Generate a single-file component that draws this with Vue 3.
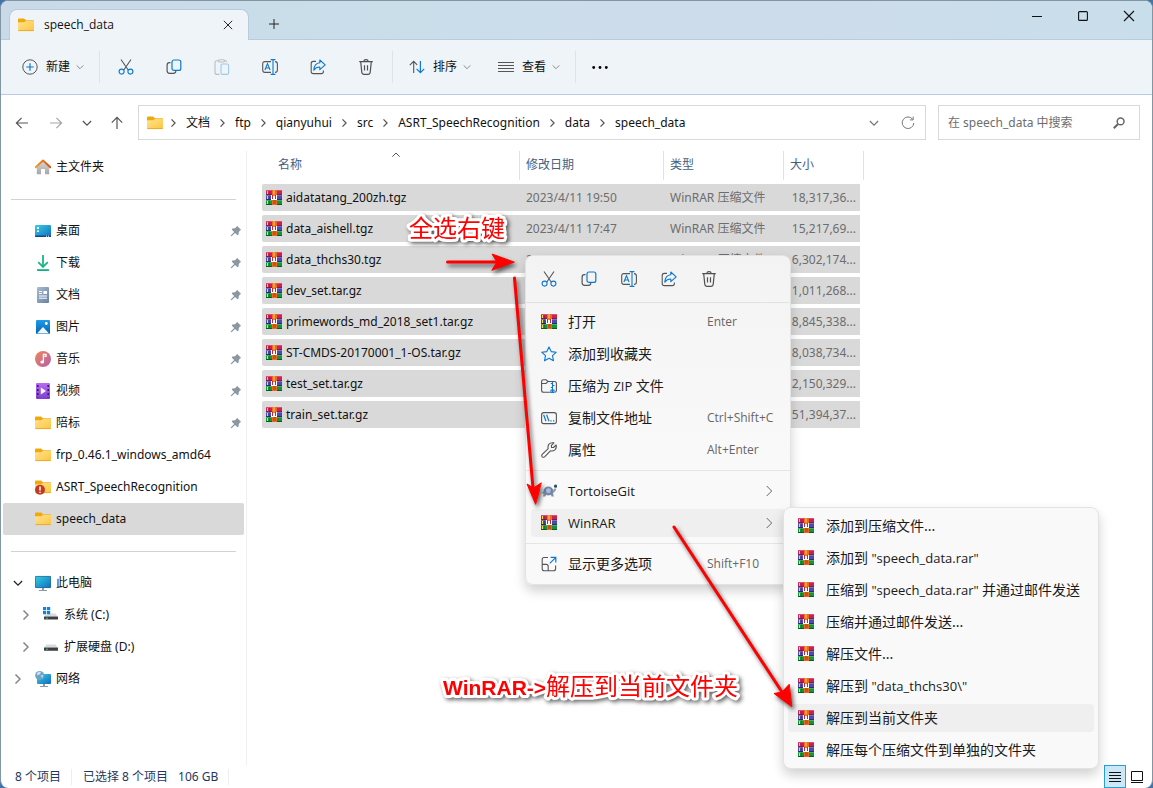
<script setup>
import { ref } from 'vue'

const query = ref('')

const editTools = [
  { icon: 'cut', name: '剪切' },
  { icon: 'copy', name: '复制' },
  { icon: 'paste', name: '粘贴', faded: true },
  { icon: 'rename', name: '重命名' },
  { icon: 'share', name: '共享' },
  { icon: 'trash', name: '删除' },
]

const menuTools = editTools.filter((tool) => !tool.faded)

const crumbs = ['文档', 'ftp', 'qianyuhui', 'src', 'ASRT_SpeechRecognition', 'data', 'speech_data']

const places = [
  { icon: 'desktop', name: '桌面', pinned: true },
  { icon: 'download', name: '下载', pinned: true },
  { icon: 'document', name: '文档', pinned: true },
  { icon: 'picture', name: '图片', pinned: true },
  { icon: 'music', name: '音乐', pinned: true },
  { icon: 'video', name: '视频', pinned: true },
  { icon: 'folder', name: '陪标', pinned: true },
  { icon: 'folder', name: 'frp_0.46.1_windows_amd64' },
  { icon: 'folder-alert', name: 'ASRT_SpeechRecognition' },
  { icon: 'folder', name: 'speech_data', selected: true },
]

const devices = [
  { icon: 'computer', name: '此电脑', open: true },
  { icon: 'drive-c', name: '系统 (C:)', nested: true },
  { icon: 'drive-d', name: '扩展硬盘 (D:)', nested: true },
  { icon: 'network', name: '网络' },
]

const files = [
  { name: 'aidatatang_200zh.tgz', date: '2023/4/11 19:50', type: 'WinRAR 压缩文件', size: '18,317,36...' },
  { name: 'data_aishell.tgz', date: '2023/4/11 17:47', type: 'WinRAR 压缩文件', size: '15,217,69...' },
  { name: 'data_thchs30.tgz', date: '2023/4/11 17:20', type: 'WinRAR 压缩文件', size: '6,302,174...' },
  { name: 'dev_set.tar.gz', size: '1,011,268...' },
  { name: 'primewords_md_2018_set1.tar.gz', size: '8,845,338...' },
  { name: 'ST-CMDS-20170001_1-OS.tar.gz', size: '8,038,734...' },
  { name: 'test_set.tar.gz', size: '2,150,329...' },
  { name: 'train_set.tar.gz', size: '51,394,37...' },
]

// Labels alternate between Chinese and Latin runs, starting with Chinese.
const menuGroups = [
  [
    { icon: 'rar', label: ['打开'], keys: 'Enter' },
    { icon: 'star', label: ['添加到收藏夹'] },
    { icon: 'zip', label: ['压缩为', ' ZIP ', '文件'] },
    { icon: 'path', label: ['复制文件地址'], keys: 'Ctrl+Shift+C' },
    { icon: 'wrench', label: ['属性'], keys: 'Alt+Enter' },
  ],
  [
    { icon: 'tortoise', label: ['', 'TortoiseGit'], sub: true },
    { icon: 'rar', label: ['', 'WinRAR'], sub: true, active: true },
  ],
  [{ icon: 'more', label: ['显示更多选项'], keys: 'Shift+F10' }],
]

const rarActions = [
  { label: ['添加到压缩文件...'] },
  { label: ['添加到', ' "speech_data.rar"'] },
  { label: ['压缩到', ' "speech_data.rar" ', '并通过邮件发送'] },
  { label: ['压缩并通过邮件发送...'] },
  { label: ['解压文件...'] },
  { label: ['解压到', ' "data_thchs30\\"'] },
  { label: ['解压到当前文件夹'], active: true },
  { label: ['解压每个压缩文件到单独的文件夹'] },
]
</script>

<template>
  <svg class="defs" aria-hidden="true">
    <defs>
      <linearGradient id="g-folder" x1="0" y1="0" x2="1" y2="1">
        <stop offset="0" stop-color="#ffe394" /><stop offset="1" stop-color="#fcc63c" />
      </linearGradient>
      <linearGradient id="g-blue" x1="0" y1="0" x2="1" y2="1">
        <stop offset="0" stop-color="#37d0e6" /><stop offset="1" stop-color="#0f6cbd" />
      </linearGradient>
      <linearGradient id="g-pic" x1="0" y1="0" x2="0" y2="1">
        <stop offset="0" stop-color="#1f9be6" /><stop offset="1" stop-color="#0563b5" />
      </linearGradient>
      <linearGradient id="g-doc" x1="0" y1="0" x2="1" y2="1">
        <stop offset="0" stop-color="#a9bdd3" /><stop offset="1" stop-color="#6681a3" />
      </linearGradient>
      <linearGradient id="g-music" x1="0" y1="0" x2="1" y2="1">
        <stop offset="0" stop-color="#f08752" /><stop offset="1" stop-color="#b55db0" />
      </linearGradient>
      <linearGradient id="g-video" x1="0" y1="0" x2="0" y2="1">
        <stop offset="0" stop-color="#b76cf2" /><stop offset="1" stop-color="#7f3fd0" />
      </linearGradient>
      <linearGradient id="g-home" x1="0" y1="0" x2="0" y2="1">
        <stop offset="0" stop-color="#d8d8d8" /><stop offset="1" stop-color="#a6a6a6" />
      </linearGradient>
      <linearGradient id="g-roof" x1="0" y1="0" x2="1" y2="0">
        <stop offset="0" stop-color="#f59a23" /><stop offset="1" stop-color="#d8520f" />
      </linearGradient>
      <linearGradient id="g-down" x1="0" y1="0" x2="0" y2="1">
        <stop offset="0" stop-color="#3fd08c" /><stop offset="1" stop-color="#12a08a" />
      </linearGradient>
    </defs>

    <symbol id="folder" viewBox="0 0 16 16">
      <path d="M0 2.6Q0 1.5 1 1.5H6L8 3.3H15Q16 3.3 16 4.3V8H0Z" fill="#f0a80c" />
      <path d="M0 6.2Q0 5.3 .9 5.3H6.3L8.1 3.7H15.1Q16 3.7 16 4.6V13.2Q16 14 15.1 14H.9Q0 14 0 13.2Z" fill="url(#g-folder)" />
      <path d="M.4 13.6H15.6" stroke="#e5a722" stroke-width=".9" />
    </symbol>
    <symbol id="folder-alert" viewBox="0 0 16 16">
      <use href="#folder" width="16" height="16" />
      <circle cx="5" cy="10.8" r="5" fill="#c23a22" />
      <path d="M5 7.6V11.6M5 12.7V14.1" stroke="#fff" stroke-width="1.5" />
    </symbol>
    <symbol id="home" viewBox="0 0 16 16">
      <path d="M1.8 7.5L8 2L14.2 7.5V15.2H10V10H6V15.2H1.8Z" fill="url(#g-home)" />
      <path d="M.7 8.3L8 1.6L15.3 8.3" fill="none" stroke="url(#g-roof)" stroke-width="2" stroke-linecap="round" stroke-linejoin="round" />
    </symbol>
    <symbol id="desktop" viewBox="0 0 16 16">
      <rect y="2" width="16" height="12" rx="1" fill="url(#g-blue)" />
      <path d="M2 4H4V6H2ZM2 7.5H4V9H2Z" fill="#fff" />
      <path d="M0 12.6H16V13Q16 14 15 14H1Q0 14 0 13Z" fill="#0a4a86" />
      <path d="M11 13.2H12M13 13.2H14" stroke="#fff" />
    </symbol>
    <symbol id="download" viewBox="0 0 16 16">
      <path d="M8 0V11.5M3.2 7.2L8 12L12.8 7.2" fill="none" stroke="#1db588" stroke-width="1.8" />
      <rect x="2" y="14" width="12" height="2" rx=".5" fill="url(#g-down)" />
    </symbol>
    <symbol id="document" viewBox="0 0 16 16">
      <rect x="2" y="0" width="12" height="16" rx="1" fill="url(#g-doc)" />
      <path d="M4 4.5H7M4 6.5H7M4 9H12M4 11.2H12" stroke="#fff" />
      <rect x="8.4" y="4" width="3.6" height="3" fill="#fff" />
    </symbol>
    <symbol id="picture" viewBox="0 0 16 16">
      <rect x="1" y="1" width="14" height="14" rx="1" fill="url(#g-pic)" />
      <path d="M2 14.6L8 8L14 14.6Z" fill="#f2faff" />
      <circle cx="11.3" cy="4.5" r="1.4" fill="#fff" />
    </symbol>
    <symbol id="music" viewBox="0 0 16 16">
      <circle cx="8" cy="8" r="8" fill="url(#g-music)" />
      <ellipse cx="7.2" cy="11" rx="1.9" ry="1.6" fill="#fff" />
      <path d="M8.4 11V3.4H11V5.4H9.3" fill="none" stroke="#fff" stroke-width="1.3" />
    </symbol>
    <symbol id="video" viewBox="0 0 16 16">
      <rect x="1" y="0" width="14" height="16" rx="1" fill="url(#g-video)" />
      <path d="M2.8 2V14.5M13.2 2V14.5" stroke="#3d1672" stroke-width="1.6" stroke-dasharray="2 2" />
      <path d="M5.8 4.6L11 8L5.8 11.4Z" fill="#fff" />
    </symbol>
    <symbol id="computer" viewBox="0 0 16 16">
      <rect y="1" width="16" height="12" rx="1" fill="url(#g-blue)" />
      <rect x=".4" y="1.4" width="15.2" height="11.2" rx=".7" fill="none" stroke="#27698f" stroke-width=".7" />
      <path d="M7 13H9V15H7ZM4 15H12V16H4Z" fill="#8d9aa5" />
    </symbol>
    <symbol id="network" viewBox="0 0 16 16">
      <rect x="2" y="3" width="14" height="10" rx="1" fill="url(#g-blue)" />
      <path d="M8 13H10V15H8ZM5 15H13V16H5Z" fill="#8d9aa5" />
      <circle cx="4.7" cy="4.5" r="4.5" fill="#6fa3c4" />
      <path d="M2 2Q4 .2 6 1L5 3.2L2.2 4.6ZM5.5 4.5L8 4L7.6 7Z" fill="#c8e2f0" />
    </symbol>
    <symbol id="drive-d" viewBox="0 0 16 16">
      <path d="M3.5 5.5H12.5L14.6 8.4H1.2Z" fill="#d9dadd" />
      <rect x="1" y="8.4" width="14" height="3.4" rx=".4" fill="#3d4043" />
      <path d="M3.2 10.2H4.8" stroke="#48e05c" />
    </symbol>
    <symbol id="drive-c" viewBox="0 0 16 16">
      <path d="M7 6.5H12.5L14.6 9.4H1.2L2 8Z" fill="#d9dadd" />
      <rect x="1" y="9.4" width="14" height="3.2" rx=".4" fill="#3d4043" />
      <path d="M3.2 11.2H4.8" stroke="#48e05c" />
      <path d="M0 0H3.2V3.2H0ZM4 0H7.2V3.2H4ZM0 4H3.2V7.2H0ZM4 4H7.2V7.2H4Z" fill="#1283dc" />
    </symbol>
    <symbol id="pin" viewBox="0 0 12 12">
      <path d="M7 .8L11.2 5L9.9 5.6L8.8 7.2L8.5 9.6L7.6 10.3L5 7.9L1.6 11.2L.8 11.2L.8 10.4L4.1 7L1.7 4.4L2.4 3.5L4.8 3.2L6.4 2.1Z" fill="#8c98a1" />
    </symbol>

    <symbol id="rar" viewBox="0 0 16 16">
      <g shape-rendering="crispEdges">
        <rect y="0" width="16" height="5" fill="#c8234f" />
        <rect y="0" width="16" height="1" fill="#e14b74" />
        <rect y="4" width="16" height="1" fill="#8d1737" />
        <rect y="5" width="16" height="5" fill="#4a4ab0" />
        <rect y="5" width="16" height="1" fill="#7472cf" />
        <rect y="9" width="16" height="1" fill="#2b2c73" />
        <rect y="10" width="16" height="5" fill="#15923a" />
        <rect y="10" width="16" height="1" fill="#3cb556" />
        <rect y="14" width="16" height="1" fill="#0b5a22" />
        <rect x="1" y="1" width="1" height="3" fill="#ffd83a" />
        <rect x="1" y="6" width="1" height="3" fill="#ffd83a" />
        <rect x="1" y="11" width="1" height="3" fill="#ffd83a" />
        <rect x="3" y="1" width="1" height="13" fill="#222" opacity=".25" />
        <rect x="6" y="0" width="5" height="15" fill="#e96b1c" />
        <rect x="7" y="0" width="2" height="4" fill="#f79a4e" />
        <rect x="7" y="10" width="3" height="4" fill="#c9540f" />
        <rect x="5" y="5" width="6" height="5" fill="#fff" />
        <path d="M6 5H10V6H6ZM6 6H7V9H6ZM9 6H10V9H9Z" fill="#c42a26" />
        <path d="M7 4H9V6H7Z" fill="#f0813a" />
      </g>
    </symbol>

    <symbol id="cut" viewBox="0 0 16 16">
      <g fill="none" stroke-width="1.1">
        <path d="M3 .5L10.2 11M13 .5L5.8 11" stroke="#555" />
        <circle cx="3.6" cy="12.6" r="2.5" stroke="#0c78d0" />
        <circle cx="12.4" cy="12.6" r="2.5" stroke="#0c78d0" />
      </g>
    </symbol>
    <symbol id="copy" viewBox="0 0 16 16">
      <g fill="none" stroke-width="1.2">
        <path d="M4.5 3.6H3.4Q1.1 3.6 1.1 6V11.8Q1.1 14.3 3.6 14.3H7.4Q9.6 14.3 9.9 12.2" stroke="#555" />
        <rect x="6" y="1" width="8.8" height="10.4" rx="2" stroke="#0c78d0" />
      </g>
    </symbol>
    <symbol id="paste" viewBox="0 0 16 16">
      <g fill="none" stroke-width="1.1">
        <path d="M4.5 1.8H3Q1 1.8 1 3.6V13.4Q1 15.4 3 15.4H5.5M10.5 1.8H11.2Q12.6 1.8 12.8 3.2" stroke="#b9bec3" />
        <rect x="4.5" y=".7" width="6" height="2.3" rx="1.1" stroke="#b9bec3" />
        <rect x="7" y="5" width="7.6" height="10.4" rx="1.5" stroke="#9ccaec" />
      </g>
    </symbol>
    <symbol id="rename" viewBox="0 0 16 16">
      <g fill="none" stroke-width="1.1">
        <path d="M9 2.6H3Q.7 2.6 .7 5V11Q.7 13.4 3 13.4H9M13 2.6Q15.4 2.6 15.4 5V11Q15.4 13.4 13 13.4" stroke="#555" />
        <path d="M8.6 .6H13.4M8.6 15.4H13.4M11 .6V15.4M2.9 11L5.5 4.6L8.1 11M3.8 9H7.2" stroke="#0c78d0" />
      </g>
    </symbol>
    <symbol id="share" viewBox="0 0 16 16">
      <g fill="none" stroke-width="1.1" stroke-linejoin="round">
        <path d="M6 2.4H3.3Q1.2 2.4 1.2 4.6V12.4Q1.2 14.6 3.4 14.6H11.3Q13.4 14.6 13.4 12.4V11.4" stroke="#555" />
        <path d="M9.8 1L15.2 5.8L9.8 10.6V8Q6.2 7.8 3.8 11.2Q4.2 4.2 9.8 3.8Z" stroke="#0c78d0" />
      </g>
    </symbol>
    <symbol id="trash" viewBox="0 0 16 16">
      <path d="M1.2 2.7H14.8M5.8 2.5Q5.9 .7 8 .7T10.2 2.5M2.7 2.8L3.8 13.4Q4 15.3 5.8 15.3H10.2Q12 15.3 12.2 13.4L13.3 2.8M6.5 6.2V11.6M9.5 6.2V11.6" fill="none" stroke="#505050" stroke-width="1.2" />
    </symbol>
    <symbol id="new" viewBox="0 0 16 16">
      <circle cx="8" cy="8" r="7.2" fill="none" stroke="#555" />
      <path d="M8 4.3V11.7M4.3 8H11.7" stroke="#0c78d0" stroke-width="1.2" />
    </symbol>
    <symbol id="sort" viewBox="0 0 16 16">
      <path d="M4.7 14V2.5M.8 6.2L4.7 2.3L8.2 5.8" fill="none" stroke="#555" stroke-width="1.1" />
      <path d="M11.4 2V13.5M7.6 9.8L11.4 13.6L15.2 9.8" fill="none" stroke="#0c78d0" stroke-width="1.2" />
    </symbol>
    <symbol id="view" viewBox="0 0 16 16">
      <path d="M0 3.5H16M0 6.5H16M0 9.5H16M0 12.5H16" stroke="#555" />
    </symbol>
    <symbol id="dots" viewBox="0 0 16 16">
      <circle cx="1.7" cy="8.5" r="1.4" /><circle cx="8" cy="8.5" r="1.4" /><circle cx="14.3" cy="8.5" r="1.4" />
    </symbol>
    <symbol id="star" viewBox="0 0 16 16">
      <path d="M8 .9L10.2 5.6L15.3 6.2L11.5 9.7L12.5 14.8L8 12.3L3.5 14.8L4.5 9.7L.7 6.2L5.8 5.6Z" fill="none" stroke="#0c78d0" stroke-width="1.1" stroke-linejoin="round" />
    </symbol>
    <symbol id="zip" viewBox="0 0 16 16">
      <path d="M9.5 14.3H2.6Q.6 14.3 .6 12.3V3.6Q.6 1.7 2.6 1.7H5L7.2 3.5H13.4Q15.4 3.5 15.4 5.5V12.3Q15.4 14 14 14.3M.8 5.5H5L7 3.6" fill="none" stroke="#555" stroke-width="1.1" />
      <path d="M11.5 3.5V14.5M9.8 5.5H11.5M11.5 7.5H13.4M9.8 9.5H11.5M10 12H13V14.5H10Z" fill="none" stroke="#0c78d0" stroke-width="1.1" />
    </symbol>
    <symbol id="path" viewBox="0 0 16 16">
      <rect x=".6" y="2.6" width="14.8" height="11" rx="2.2" fill="none" stroke="#555" stroke-width="1.1" />
      <path d="M2.6 4.8L5 11.2M5.6 4.8L8 11.2M9.3 10.8H10.6M12 10.8H13.3" stroke="#0c78d0" stroke-width="1.2" />
    </symbol>
    <symbol id="wrench" viewBox="0 0 16 16">
      <path d="M12.9 .9Q9.8 .2 8 2.2Q6.5 4 7.2 6.6L1.2 12.4Q.2 13.6 1.2 14.8Q2.4 15.8 3.6 14.8L9.4 8.8Q12 9.5 13.9 7.9Q15.9 6 15.1 3L12.5 5.5L10.5 5.4L10.4 3.4Z" fill="none" stroke="#555" stroke-width="1.1" stroke-linejoin="round" />
    </symbol>
    <symbol id="tortoise" viewBox="0 0 16 16">
      <path d="M3 10L1.8 13.4H4.4L5.4 11.6H9.6L10.6 13.6H12.8L12 10Z" fill="#8a8f98" />
      <ellipse cx="7.4" cy="8" rx="5" ry="4.4" fill="#7088ac" />
      <path d="M4.6 6L7.3 4.6L10.2 6L10 9.5L7.4 10.8L4.8 9.5Z" fill="#a9bbdc" stroke="#5c6f92" stroke-width=".6" />
      <path d="M.4 10L3 8.6V11Z" fill="#8a8f98" />
      <path d="M11.5 8.5L13.2 5.4L15.4 5.8L14.6 7.8L12.4 10Z" fill="#979ba3" />
      <circle cx="14.5" cy="3.2" r="1.6" fill="#2c5067" />
    </symbol>
    <symbol id="more" viewBox="0 0 16 16">
      <path d="M7 1.5H3.2Q1.2 1.5 1.2 3.5V12.7Q1.2 14.7 3.2 14.7H12.6Q14.6 14.7 14.6 12.7V9.4M1.4 8.4H5.2Q7.2 8.4 7.2 10.4V14.6" fill="none" stroke="#555" stroke-width="1.1" />
      <path d="M9.6 1.4H14.8V6.6M14.6 1.6L8.8 7.4" fill="none" stroke="#0c78d0" stroke-width="1.2" />
    </symbol>

    <symbol id="chev-down" viewBox="0 0 8 8">
      <path d="M.7 2.4L4 5.7L7.3 2.4" fill="none" stroke="currentColor" />
    </symbol>
    <symbol id="chev-right" viewBox="0 0 8 8">
      <path d="M2 .4L5.6 4L2 7.6" fill="none" stroke="currentColor" stroke-width="1.2" />
    </symbol>
    <symbol id="chev-thin" viewBox="0 0 12 12">
      <path d="M3.7 1L8.7 6L3.7 11" fill="none" stroke="currentColor" />
    </symbol>
    <symbol id="arrow" viewBox="0 0 14 14">
      <path d="M13 7H1.6M6.6 1.8L1.4 7L6.6 12.2" fill="none" stroke="currentColor" stroke-width="1.2" />
    </symbol>
    <symbol id="close" viewBox="0 0 12 12">
      <path d="M1 1L11 11M11 1L1 11" stroke="currentColor" stroke-width="1.1" />
    </symbol>
  </svg>

  <div class="window">
    <header class="titlebar">
      <div class="tab">
        <svg class="i16"><use href="#folder" /></svg>
        <span class="tab-name">speech_data</span>
        <button class="tab-close" aria-label="关闭标签页"><svg class="i10"><use href="#close" /></svg></button>
      </div>
      <button class="tab-new" aria-label="新建标签页">
        <svg class="i10" viewBox="0 0 10 10"><path d="M5 0V10M0 5H10" stroke="#222" /></svg>
      </button>
      <div class="controls">
        <button aria-label="最小化"><svg class="i10" viewBox="0 0 10 10"><path d="M0 5.5H10" stroke="#111" /></svg></button>
        <button aria-label="最大化"><svg class="i10" viewBox="0 0 10 10"><rect x=".6" y=".6" width="8.800" height="8.800" rx="1" fill="none" stroke="#111" stroke-width="1.1" /></svg></button>
        <button aria-label="关闭"><svg class="i12"><use href="#close" /></svg></button>
      </div>
    </header>

    <div class="toolbar">
      <button class="tool-text tool-new">
        <svg class="i16"><use href="#new" /></svg>新建<svg class="i8"><use href="#chev-down" /></svg>
      </button>
      <span class="bar"></span>
      <button v-for="tool in editTools" :key="tool.icon" class="tool" :aria-label="tool.name" :disabled="tool.faded">
        <svg class="i16"><use :href="'#' + tool.icon" /></svg>
      </button>
      <span class="bar"></span>
      <button class="tool-text">
        <svg class="i16"><use href="#sort" /></svg>排序<svg class="i8"><use href="#chev-down" /></svg>
      </button>
      <button class="tool-text">
        <svg class="i16"><use href="#view" /></svg>查看<svg class="i8"><use href="#chev-down" /></svg>
      </button>
      <span class="bar"></span>
      <button class="tool tool-more" aria-label="更多"><svg class="i16"><use href="#dots" /></svg></button>
    </div>

    <nav class="navrow">
      <div class="history">
        <button aria-label="后退"><svg class="i14"><use href="#arrow" /></svg></button>
        <button aria-label="前进" class="pale"><svg class="i14 flip"><use href="#arrow" /></svg></button>
        <button aria-label="最近浏览"><svg class="i10"><use href="#chev-down" /></svg></button>
        <button aria-label="上移"><svg class="i14 up"><use href="#arrow" /></svg></button>
      </div>
      <div class="address">
        <svg class="i16 address-icon"><use href="#folder" /></svg>
        <template v-for="crumb in crumbs" :key="crumb">
          <svg class="crumb-chev"><use href="#chev-right" /></svg>
          <a href="#">{{ crumb }}</a>
        </template>
        <span class="spring"></span>
        <button aria-label="历史地址"><svg class="i10"><use href="#chev-down" /></svg></button>
        <button aria-label="刷新">
          <svg class="i14" viewBox="0 0 14 14"><path d="M11.6 3.2A5.8 5.8 0 1 0 12.8 7M12.2 .6V3.9H8.9" fill="none" stroke="currentColor" /></svg>
        </button>
      </div>
      <label class="search">
        <input v-model="query" type="text" placeholder="在 speech_data 中搜索" aria-label="搜索" />
        <svg class="i12" viewBox="0 0 12 12"><circle cx="7.6" cy="4.4" r="3.4" fill="none" stroke="#666" stroke-width="1.5" /><path d="M5 7L.8 11.2" stroke="#666" stroke-width="2" /></svg>
      </label>
    </nav>

    <div class="content">
      <aside class="sidebar">
        <a href="#" class="place"><span class="twist"></span><svg class="i16"><use href="#home" /></svg>主文件夹</a>
        <hr />
        <a v-for="p in places" :key="p.name" href="#" class="place" :class="{ selected: p.selected }">
          <span class="twist"></span>
          <svg class="i16"><use :href="'#' + p.icon" /></svg>{{ p.name }}
          <svg v-if="p.pinned" class="pin"><use href="#pin" /></svg>
        </a>
        <hr />
        <a v-for="d in devices" :key="d.name" href="#" class="place" :class="{ nested: d.nested, open: d.open }">
          <span class="twist"><svg class="i10"><use :href="d.open ? '#chev-down' : '#chev-right'" /></svg></span>
          <svg class="i16"><use :href="'#' + d.icon" /></svg>{{ d.name }}
        </a>
      </aside>

      <main class="listing">
        <table>
          <colgroup><col class="c-name" /><col class="c-date" /><col class="c-type" /><col class="c-size" /></colgroup>
          <thead>
            <tr>
              <th class="sorted">名称<svg class="sort-mark" viewBox="0 0 8 8"><path d="M.3 5.7L4 2L7.7 5.7" fill="none" stroke="#555" /></svg></th>
              <th>修改日期</th>
              <th>类型</th>
              <th>大小</th>
            </tr>
          </thead>
          <tbody>
            <tr v-for="f in files" :key="f.name">
              <td class="file"><span><svg class="i16"><use href="#rar" /></svg>{{ f.name }}</span></td>
              <td>{{ f.date }}</td>
              <td>{{ f.type }}</td>
              <td class="size">{{ f.size }}</td>
            </tr>
          </tbody>
        </table>
      </main>
    </div>

    <footer class="status">
      <span class="count">8 个项目</span>
      <span class="chosen">已选择 8 个项目</span>
      <span class="total">106 GB</span>
      <span class="spring"></span>
      <button class="mode on" aria-label="详细信息"><svg class="i12" viewBox="0 0 12 12"><path d="M0 1.5H12M0 4.5H12M0 7.5H12M0 10.5H12" stroke="#111" /></svg></button>
      <button class="mode" aria-label="大图标"><svg class="i12" viewBox="0 0 12 12"><path d="M.5 .5H11.5V9.5H.5ZM0 11.5H12" fill="none" stroke="#111" /></svg></button>
    </footer>

    <div class="menu context" role="menu">
      <div class="menu-tools">
        <button v-for="tool in menuTools" :key="tool.icon" :aria-label="tool.name"><svg class="i16"><use :href="'#' + tool.icon" /></svg></button>
      </div>
      <div v-for="(group, g) in menuGroups" :key="g" class="group">
        <button v-for="item in group" :key="item.label.join('')" role="menuitem" class="item" :class="{ active: item.active }">
          <svg class="i16"><use :href="'#' + item.icon" /></svg>
          <span class="label"><span v-for="(part, i) in item.label" :key="i" :class="{ latin: i % 2 }">{{ part }}</span></span>
          <span v-if="item.keys" class="keys">{{ item.keys }}</span>
          <svg v-if="item.sub" class="i12 sub"><use href="#chev-thin" /></svg>
        </button>
      </div>
    </div>

    <div class="menu submenu" role="menu">
      <button v-for="item in rarActions" :key="item.label.join('')" role="menuitem" class="item" :class="{ active: item.active }">
        <svg class="i16"><use href="#rar" /></svg>
        <span class="label"><span v-for="(part, i) in item.label" :key="i" :class="{ latin: i % 2 }">{{ part }}</span></span>
      </button>
    </div>

    <svg class="notes" width="820" height="720" viewBox="0 0 820 720">
      <g class="arrows">
        <path d="M447.500 262H500M514.500 278L533 488M674 527L782 692" />
        <path class="head" d="M514 262L492 254L497 262L492 270ZM535.500 504L527 484L533.500 488L541 483ZM791.500 706.500L774 693.500L782 692L789 684.500Z" />
      </g>
      <g class="captions">
        <text x="409" y="237">全选右键</text>
        <text x="443" y="695"><tspan class="arial">WinRAR-&gt;</tspan>解压到当前文件夹</text>
      </g>
    </svg>
  </div>
</template>

<style>
html {
  background: #3f74ad;
}
body {
  margin: 0;
}
</style>

<style scoped>
.defs {
  position: absolute;
  width: 0;
  height: 0;
}
.window {
  position: relative;
  box-sizing: border-box;
  min-height: 100vh;
  display: flex;
  flex-direction: column;
  border: solid #8295a3;
  border-width: 1px 1px 0;
  border-radius: 8px;
  overflow: hidden;
  background: #fff;
  color: #111;
  font: 12px/16px "Noto Sans", "Noto Sans CJK SC", sans-serif;
}
button {
  display: flex;
  align-items: center;
  justify-content: center;
  padding: 0;
  border: 0;
  background: none;
  color: inherit;
  font: inherit;
}
a {
  color: inherit;
  text-decoration: none;
}
svg {
  flex: none;
}
.i8 { width: 8px; height: 8px; }
.i10 { width: 10px; height: 10px; }
.i12 { width: 12px; height: 12px; }
.i14 { width: 14px; height: 14px; }
.i16 { width: 16px; height: 16px; }
.spring {
  flex: 1;
}

.titlebar {
  display: flex;
  height: 39px;
  box-sizing: border-box;
  padding-left: 8px;
  border-bottom: 1px solid #b9ccdd;
  background: linear-gradient(90deg, #c9d9e7, #c9deea 30%, #cddceb 55%, #cddceb 70%, #c9deeb);
}
.tab {
  display: flex;
  align-items: center;
  box-sizing: border-box;
  width: 240px;
  height: 31px;
  margin-top: 8px;
  padding: 0 15px 0 8px;
  border: 1px solid #b9ccdd;
  border-bottom: 0;
  border-radius: 8px 8px 0 0;
  background: #eff4f9;
}
.tab-name {
  flex: 1;
  margin-left: 10px;
  font-family: "Open Sans", sans-serif;
}
.tab-new {
  width: 50px;
  height: 46px;
  color: #222;
}
.controls {
  display: flex;
  margin-left: auto;
}
.controls button {
  width: 46px;
  height: 30px;
}

.toolbar {
  display: flex;
  align-items: center;
  height: 54px;
  border-bottom: 1px solid #b9ccdf;
  background: #eff4f9;
}
.tool {
  width: 48px;
  height: 40px;
}
.tool-more {
  width: 44px;
}
.tool-text {
  gap: 8px;
  height: 40px;
  padding: 0 13px 0 14px;
}
.tool-text .i8 {
  margin-left: -2px;
  color: #888;
}
.tool-new {
  padding-left: 21px;
}
.bar {
  width: 1px;
  height: 32px;
  margin: 0 2px;
  background: #dde3e9;
}

.navrow {
  display: flex;
  gap: 12px;
  padding: 10px 12px 7px 5px;
}
.history {
  display: grid;
  grid-template-columns: 32px 36px 26px 34px;
  margin-right: -8px;
  color: #555;
}
.pale {
  color: #a5a5a5;
}
.flip {
  transform: rotate(180deg);
}
.up {
  transform: rotate(90deg);
}
.address,
.search {
  display: flex;
  align-items: center;
  box-sizing: border-box;
  height: 35px;
  border: 1px solid #d9d9d9;
}
.address {
  flex: 1;
  padding-left: 8px;
}
.address-icon {
  margin-right: -2px;
}
.address button {
  width: 34px;
  height: 32px;
  color: #777;
}
.crumb-chev {
  width: 25px;
  height: 8px;
  color: #555;
}
.search {
  width: 202px;
  padding: 0 14px 0 9px;
}
.search input {
  flex: 1;
  min-width: 0;
  padding: 0;
  border: 0;
  outline: 0;
  background: none;
  font: inherit;
}
.search input::placeholder {
  color: #6d6d6d;
  opacity: 1;
}

.content {
  flex: 1;
  display: flex;
}
.sidebar {
  width: 245px;
  margin-top: 4px;
  border-right: 1px solid #f0f0f0;
}
.place {
  display: flex;
  align-items: center;
  height: 32px;
  margin: 0 2px;
  border-radius: 2px;
}
.place > .i16 {
  margin-right: 5px;
}
.place.selected {
  background: #d9d9d9;
}
.twist {
  display: flex;
  width: 22px;
  margin-left: 10px;
  color: #888;
}
.nested .twist {
  margin-left: 18px;
}
.open .twist {
  color: #222;
}
.pin {
  width: 12px;
  height: 12px;
  margin-left: auto;
  margin-right: 2px;
}
.sidebar hr {
  height: 1px;
  margin: 16px 10px 15px;
  border: 0;
  background: #d2d2d2;
}

.listing {
  flex: 1;
  min-width: 0;
  padding-left: 15px;
}
table {
  table-layout: fixed;
  width: 602px;
  border-spacing: 0 4px;
}
.c-name { width: 258px; }
.c-date { width: 144px; }
.c-type { width: 120px; }
.c-size { width: 80px; }
th {
  box-sizing: border-box;
  height: 29px;
  padding: 0 6px 2px;
  border-right: 1px solid #e2e2e2;
  color: #44607f;
  font-weight: 400;
  text-align: left;
}
th.sorted {
  position: relative;
  padding-left: 16px;
}
.sort-mark {
  position: absolute;
  top: 0;
  left: 50%;
  width: 10px;
  height: 8px;
}
td {
  height: 27px;
  padding: 0 6px;
  background: #d9d9d9 padding-box;
  color: #6d6d6d;
  white-space: nowrap;
  overflow: hidden;
}
td.file {
  padding-left: 4px;
  border-radius: 2px 0 0 2px;
  color: #111;
}
td.file span {
  display: flex;
  align-items: center;
  gap: 4px;
}
td.size {
  padding: 0 4px;
  border-right: 4px solid transparent;
  border-radius: 0 4px 4px 0;
  text-align: right;
}

.status {
  display: flex;
  align-items: center;
  height: 23px;
  padding: 0 4px 0 14px;
  color: #1e395b;
}
.count,
.total {
  padding-right: 10px;
  border-right: 1px solid #eee;
}
.chosen {
  padding: 0 10px 0 11px;
}
.mode {
  box-sizing: border-box;
  width: 22px;
  height: 23px;
}
.mode.on {
  border: 1px solid #26a0da;
  background: #cce8f6;
}

.menu {
  position: absolute;
  box-sizing: border-box;
  border: 1px solid #e3e3e3;
  border-radius: 8px;
  background: #f9f9f9;
  box-shadow: 0 6px 12px rgba(0, 0, 0, 0.18);
  color: #1a1a1a;
  font-size: 14px;
  line-height: 20px;
}
.context {
  top: 254px;
  left: 524px;
  width: 266px;
  background: linear-gradient(#f3f3f3, #f9f9f9 60%);
}
.menu-tools {
  display: flex;
  height: 46px;
  margin-bottom: -1px;
  padding-left: 3px;
  border-bottom: 1px solid #e2e2e2;
}
.menu-tools button {
  width: 40px;
}
.group,
.submenu {
  display: flex;
  flex-direction: column;
  gap: 4px;
}
.group {
  padding: 6px 5px;
}
.group + .group {
  border-top: 1px solid #e5e5e5;
}
.item {
  height: 28px;
  padding: 0 10px;
  justify-content: flex-start;
  border-radius: 4px;
}
.item.active {
  background: #efefef;
}
.label {
  flex: 1;
  margin-left: 11px;
  text-align: left;
  white-space: pre;
}
.latin {
  font-family: "Open Sans", sans-serif;
  font-size: 13px;
}
.keys {
  width: 68px;
  font: 12px/20px "Open Sans", sans-serif;
  color: #666;
  text-align: left;
  white-space: nowrap;
}
.sub {
  color: #666;
}
.submenu {
  top: 506px;
  left: 782px;
  width: 316px;
  padding: 4px;
}
.submenu .label {
  margin-left: 12px;
}

.notes {
  position: absolute;
  top: -1px;
  left: -1px;
  pointer-events: none;
}
.arrows {
  fill: none;
  stroke: #fe0000;
  stroke-width: 3px;
  stroke-linecap: round;
  filter: drop-shadow(2px 3px 2px rgba(0, 0, 0, 0.6));
}
.head {
  fill: #fe0000;
  stroke-width: 1px;
}
.captions {
  fill: #fe0000;
  stroke: #fff;
  stroke-width: 6px;
  stroke-linejoin: round;
  paint-order: stroke;
  filter: drop-shadow(2px 2px 2px rgba(0, 0, 0, 0.6));
  font: 24px "Noto Sans CJK SC", sans-serif;
}
.arial {
  font: bold 21px "Liberation Sans", sans-serif;
}
</style>
